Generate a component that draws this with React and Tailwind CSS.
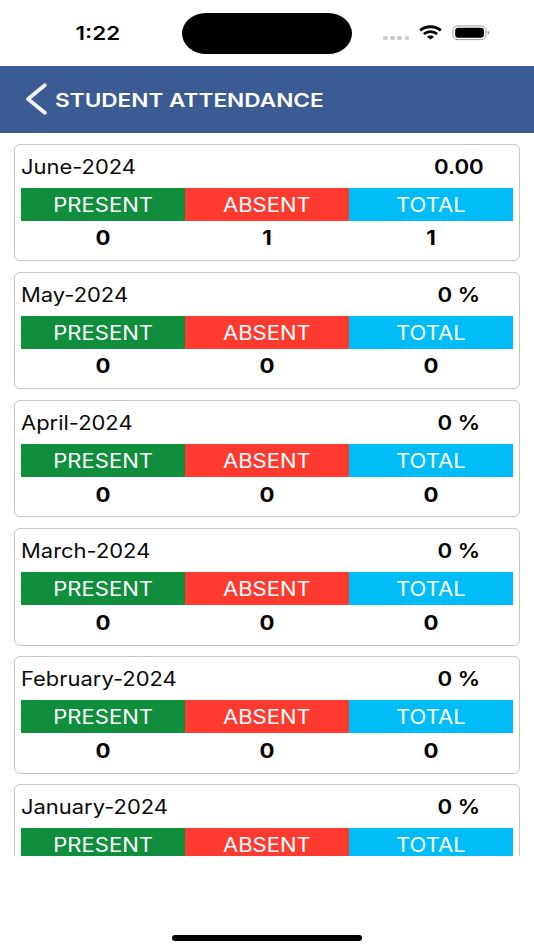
const months = [
  { name: "June-2024", percent: "0.00", values: ["0", "1", "1"] },
  { name: "May-2024", percent: "0 %", values: ["0", "0", "0"] },
  { name: "April-2024", percent: "0 %", values: ["0", "0", "0"] },
  { name: "March-2024", percent: "0 %", values: ["0", "0", "0"] },
  { name: "February-2024", percent: "0 %", values: ["0", "0", "0"] },
  { name: "January-2024", percent: "0 %", values: [] },
];

function StatusBar() {
  return (
    <div className="flex h-[66px] shrink-0 items-start">
      <div className="flex w-[182px] justify-center pt-[22px] pl-[14px]">
        <span className="scale-x-[1.18] text-[19px] leading-6 font-semibold">1:22</span>
      </div>
      <div className="mt-[13px] h-[41px] w-[170px] rounded-[24px/20.5px] bg-black" />
      <div className="mt-[36px] ml-[31px] flex gap-[2.4px]">
        <i className="h-[4px] w-[4.8px] rounded-[1.5px] bg-[#cbcbcb]" />
        <i className="h-[4px] w-[4.8px] rounded-[1.5px] bg-[#cbcbcb]" />
        <i className="h-[4px] w-[4.8px] rounded-[1.5px] bg-[#cbcbcb]" />
        <i className="h-[4px] w-[4.8px] rounded-[1.5px] bg-[#cbcbcb]" />
      </div>
      <svg className="mt-[25px] ml-[10px] h-[15px] w-[23px]" viewBox="0 0 23 15" fill="none" stroke="#000">
        <path d="M1.2 5.4C7 .6 16 .6 21.8 5.4" strokeWidth="2.9" />
        <path d="M4.9 9C8.6 5.9 14.4 5.9 18.1 9" strokeWidth="2.7" />
        <path d="M8 12C10 10.1 13 10.1 15 12L11.5 14.6Z" fill="#000" stroke="none" />
      </svg>
      <svg className="mt-[25px] ml-[10px] h-[16px] w-[38px]" viewBox="0 0 38 16">
        <rect x="1" y=".9" width="33" height="13.7" rx="4.7" ry="4.2" fill="none" stroke="#9b9b9b" />
        <rect x="3.2" y="2.8" width="28.7" height="10" rx="3" ry="2.7" fill="#000" />
        <path d="M35.7 5.7C37.6 6.5 37.6 9 35.7 9.8Z" fill="#8c8c8c" />
      </svg>
    </div>
  );
}

function Card({ month }) {
  return (
    <div className="h-[117.3px] shrink-0 rounded-[6px] border border-[#c6c6c6] px-[6px]">
      <div className="flex h-[43px] items-center justify-between pt-[2px]">
        <span className="origin-left scale-x-[1.125] text-[19.5px] text-[#0a0a0a]">{month.name}</span>
        <div className="flex w-[109px] justify-center">
          <span className="scale-x-[1.14] text-[19.5px] font-semibold whitespace-pre">{month.percent}</span>
        </div>
      </div>
      <div className="grid h-[33px] grid-cols-3 text-[19.5px] text-white">
        <div className="flex items-center justify-center bg-[#0f8f3c] pt-[2px]"><span className="scale-x-[1.13]">PRESENT</span></div>
        <div className="flex items-center justify-center bg-[#ff3b30] pt-[2px]"><span className="scale-x-[1.13]">ABSENT</span></div>
        <div className="flex items-center justify-center bg-[#00bdf7] pt-[2px]"><span className="scale-x-[1.13]">TOTAL</span></div>
      </div>
      <div className="grid h-[34px] grid-cols-3 items-center pt-[2px] text-center text-[19.5px] font-bold">
        {month.values.map((value, i) => (
          <span key={i} className="scale-x-[1.14]">{value}</span>
        ))}
      </div>
    </div>
  );
}

export default function App() {
  return (
    <div className="flex h-[950px] w-[534px] flex-col overflow-hidden bg-white font-[Inter,'Liberation_Sans',sans-serif] text-black">
      <StatusBar />
      <header className="flex h-[67px] shrink-0 items-center bg-[#3b5b93] pl-[26px] text-white">
        <svg className="mb-[2px] h-[32px] w-[21px]" viewBox="0 0 21 32" fill="none" stroke="#f4f6fa" strokeWidth="3.7" strokeLinecap="round" strokeLinejoin="round">
          <path d="M18.8 2.2L2 16L18.8 29.8" />
        </svg>
        <h1 className="ml-[8px] origin-left scale-x-[1.19] pt-[3px] text-[19px] font-semibold whitespace-nowrap">STUDENT ATTENDANCE</h1>
      </header>
      <main className="flex h-[723px] shrink-0 flex-col gap-[10.8px] overflow-hidden px-[14px] pt-[11px]">
        {months.map((month) => (
          <Card key={month.name} month={month} />
        ))}
      </main>
      <div className="mx-auto mt-[79px] h-[6px] w-[190px] rounded-full bg-black" />
    </div>
  );
}
